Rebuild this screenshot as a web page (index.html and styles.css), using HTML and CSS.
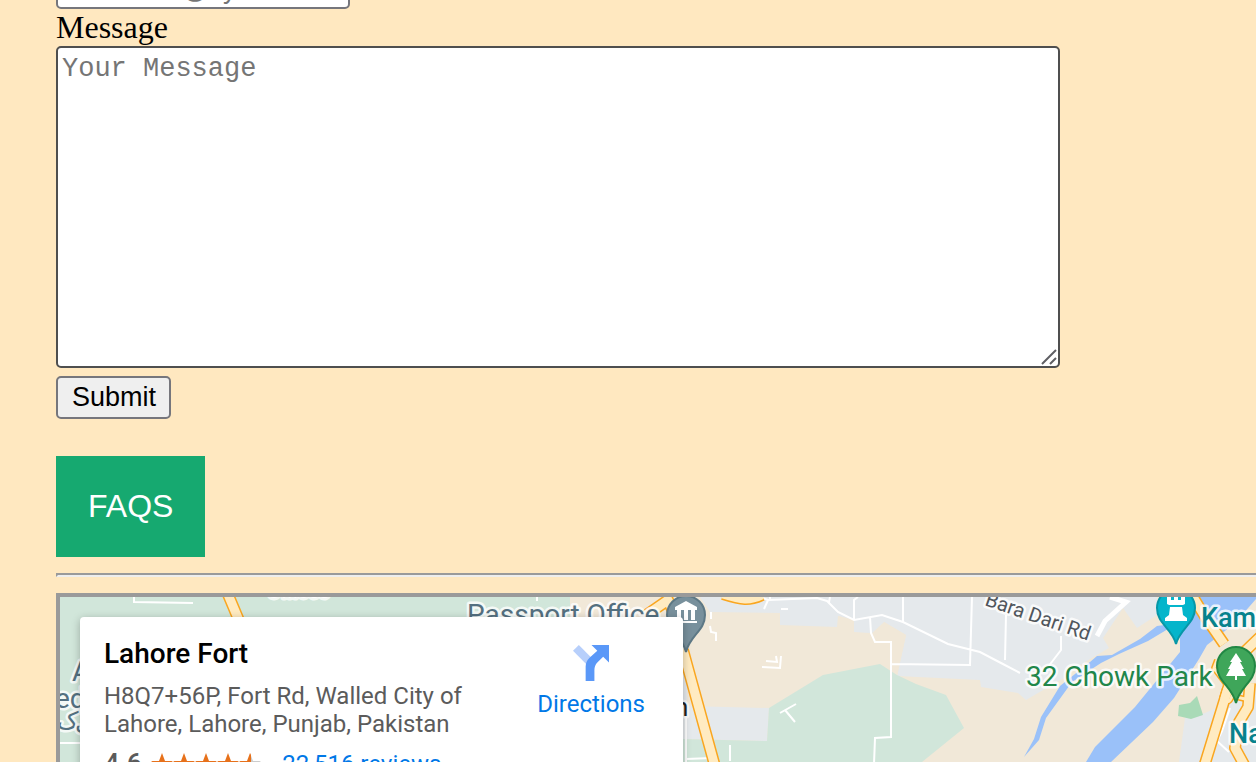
FILE: index.html
```html
<!DOCTYPE html>
<html lang="en">
<head>
<meta charset="utf-8">
<title>Contact</title>
<link rel="stylesheet" href="styles.css">
</head>
<body>
<main class="page">
  <form class="contact-form">
    <input class="text-field" type="email" placeholder="username@xyz" aria-label="Email">
    <label class="field-label" for="message">Message</label>
    <div class="message-wrap">
      <textarea class="message" id="message" placeholder="Your Message"></textarea>
      <svg class="grip" viewBox="0 0 16 16" aria-hidden="true"><path d="M1 15 15 1M9 15l6-6"/></svg>
    </div>
    <button class="submit" type="submit">Submit</button>
  </form>
  <a class="faq-link" href="#faqs">FAQS</a>
  <hr class="divider">
  <section class="map" aria-label="Map of Lahore Fort">
    <svg class="map-canvas" viewBox="60 597 1196 165" preserveAspectRatio="xMinYMin slice">
      <rect class="land" x="60" y="597" width="1196" height="165"/>
      <path class="green" d="M60 597H570V640H300V762H60Z"/>
      <path class="urban" d="M700 597 710 612 780 613V625L837 627 838 616 854 620V632L872 633 884 622 906 635 897 676 980 680 981 687 1018 693 1026 700 1062 679 1080 665 1109 648 1103 638 1123 608 1137 628 1157 615V597ZM687 706 769 708 767 741 687 739ZM1185 718 1205 713 1256 690V762H1179ZM683 670H687V739H683Z"/>
      <path class="land" d="M838 616 854 620V632L872 633 884 622 906 635 897 676H838Z"/>
      <path class="urban" d="M854 618V632L872 633 884 622 884 610Z"/>
      <path class="green" d="M769 708 823 675 880 664 897 675 916 684 946 695 964 728 922 762H683V739L767 741Z"/>
      <path class="grove" d="M1179 705 1190 703 1197 696 1203 715 1191 719 1178 716Z"/>
      <path class="water" d="M1172 597H1256V599L1235 623 1207 645 1199 659 1174 698 1153 722 1111 762H1086L1095 747 1135 707 1180 652V630L1168 629 1148 641 1119 654 1101 663 1072 682 1046 718 1039 740 1024 757 1034 739 1041 717 1060 686 1090 662 1097 656 1112 655 1140 639 1157 626 1172 624Z"/>
      <g class="street">
        <path d="M134 597V602L193 603M60 743H81M537 597V601"/>
        <path d="M760 597 768 600 817 598 827 601 838 612 854 620 882 615 903 622 948 644 980 652 1001 663 1020 673M770 597V600M768 600 764 609M830 597 829 602M854 620V600L858 597M870 617 871 633 875 642H891V737L875 738 874 764M903 597V622M972 597 970 665 891 664M1006 615 1005 660M1061 636V650L1048 667M781 609H788"/>
        <path d="M711 612V619M710 626 711 632 716 633V641M762 667 780 668 781 656M766 661 777 662 776 656M780 713 796 704M785 710 795 722M686 706V762M686 759 712 758M730 745V761M1230 708 1222 731 1217 741 1229 752"/>
        <path class="wide" d="M1097 636 1105 621 1126 602 1110 597"/>
      </g>
      <g class="road-edge">
        <path d="M227 592 243 630M645 616 668 600 674 614M683 650 716 770M723 594C742 600 749 601 762 595M1190 592 1204 615 1224 644M1236 660 1263 634M1230 682 1203 770M1250 683 1248 707 1239 722 1235 748 1247 770"/>
        <path class="thin" d="M1217 660 1214 668 1226 684M1225 688 1222 698Q1229 706 1232 696L1245 699"/>
      </g>
      <g class="road">
        <path d="M227 592 243 630M645 616 668 600 674 614M683 650 716 770M723 594C742 600 749 601 762 595M1190 592 1204 615 1224 644M1236 660 1263 634M1230 682 1203 770M1250 683 1248 707 1239 722 1235 748 1247 770"/>
        <path class="thin" d="M1217 660 1214 668 1226 684M1225 688 1222 698Q1229 706 1232 696L1245 699"/>
      </g>
      <g class="place">
        <text class="minor" x="72" y="681">A</text>
        <text class="minor" x="55" y="708">ed</text>
        <text class="arabic" x="57" y="729">ک</text>
        <text class="arabic" x="75" y="729">ل</text>
        <text class="minor" x="467" y="624">Passport Office</text>
        <text class="ghost" x="267" y="598">Offices</text>
        <text class="town" x="674" y="716">n</text>
        <text class="lane" transform="translate(984 605) rotate(19)">Bara Dari Rd</text>
        <text class="park" x="1026" y="686">32 Chowk Park</text>
        <text class="sight" x="1201" y="627">Kamran</text>
        <text class="sight" x="1229" y="743">Nawan</text>
      </g>
      <g transform="translate(686 615)">
        <path class="pin-slate" d="M0 37C-4 20-19 16-19 0A19 19 0 0 1 19 0C19 16 4 20 0 37Z"/>
        <path class="glyph" d="M-11-5V-8L0-14 11-8V-5H9V5H5V-5H2V5H-2V-5H-5V5H-9V-5ZM-11 6H11V8H-11Z"/>
      </g>
      <g transform="translate(1176 608)">
        <path class="pin-teal" d="M0 36C-4 20-19 16-19 0A19 19 0 0 1 19 0C19 16 4 20 0 36Z"/>
        <path class="glyph" d="M-9-13H-5V-8H-2V-13H2V-8H5V-13H9V-4L7-3H-7L-9-4ZM-6-1H6L7 7 11 10V13H-11V10L-7 7Z"/>
      </g>
      <g transform="translate(1236 666)">
        <path class="pin-green" d="M0 37C-4 20-19 16-19 0A19 19 0 0 1 19 0C19 16 4 20 0 37Z"/>
        <path class="glyph" d="M0-13 6-4H4L8 3H6L10 10H1V14H-1V10H-10L-6 3H-8L-4-4H-6Z"/>
      </g>
    </svg>
    <article class="info-card">
      <div class="info-main">
        <h2 class="info-title">Lahore Fort</h2>
        <p class="info-address">H8Q7+56P, Fort Rd, Walled City of Lahore, Lahore, Punjab, Pakistan</p>
        <div class="info-rating">
          <span class="score">4.6</span>
          <svg class="stars" viewBox="0 0 110 22" aria-label="4.6 of 5 stars">
            <path class="star" d="M11 0 14 8H22L15 13 18 21 11 16 4 21 7 13 0 8H8ZM33 0 36 8H44L37 13 40 21 33 16 26 21 29 13 22 8H30ZM55 0 58 8H66L59 13 62 21 55 16 48 21 51 13 44 8H52ZM77 0 80 8H88L81 13 84 21 77 16 70 21 73 13 66 8H74Z"/>
            <path class="star-off" d="M99 0 102 8H110L103 13 106 21 99 16Z"/>
            <path class="star" d="M99 0 100 2V17L99 16 92 21 95 13 88 8H96Z"/>
          </svg>
          <a class="reviews" href="#reviews">22,516 reviews</a>
        </div>
      </div>
      <a class="directions" href="#directions">
        <svg class="directions-icon" viewBox="0 0 37 37" aria-hidden="true">
          <path class="branch" d="M6 0 19 13 14 20 0 6Z"/>
          <path class="arrow" d="M19 0H37V18L31 12 25 18Q22 21 22 26V37H13V22Q13 17 17 13L25 6Z"/>
        </svg>
        Directions
      </a>
    </article>
  </section>
</main>
</body>
</html>
```
FILE: styles.css
```css
* { box-sizing: border-box; }

body {
  margin: 0;
  background: #ffe8c0;
  color: #000;
  font-family: "Liberation Serif", serif;
}

.page {
  display: flex;
  flex-direction: column;
  height: 100vh;
  padding-left: 56px;
  overflow: hidden;
}

.contact-form {
  display: flex;
  flex: none;
  flex-direction: column;
  align-items: flex-start;
  margin-top: -33px;
}

.text-field {
  width: 294px;
  height: 42px;
  padding: 4px 4px 2px;
  border: 2px solid #76767c;
  border-radius: 5px;
  background: #fff;
  font: 27px "Liberation Sans", sans-serif;
}

.text-field::placeholder,
.message::placeholder { color: #757575; opacity: 1; }

.field-label { font-size: 32px; line-height: 37px; }

.message-wrap {
  position: relative;
  width: calc(100% - 196px);
  max-width: 1004px;
}

.message {
  display: block;
  width: 100%;
  height: 322px;
  padding: 6px 4px;
  border: 2px solid #4f4f4f;
  border-radius: 5px;
  background: #fff;
  font: 27px/30px "Liberation Mono", monospace;
  resize: none;
}

.grip {
  position: absolute;
  right: 3px;
  bottom: 3px;
  width: 16px;
  height: 16px;
  fill: none;
  stroke: #5f5f64;
  stroke-width: 2;
}

.submit {
  height: 43px;
  margin-top: 8px;
  padding: 0 13px 0 14px;
  border: 2px solid #76767c;
  border-radius: 5px;
  background: #efefef;
  color: #000;
  font: 27px "Liberation Sans", sans-serif;
}

.faq-link {
  flex: none;
  align-self: flex-start;
  margin-top: 37px;
  padding: 32px;
  background: #16a970;
  color: #fff;
  font: 32px/37px "Liberation Sans", sans-serif;
  text-decoration: none;
}

.divider {
  flex: none;
  width: 100%;
  height: 4px;
  margin: 16px 0;
  border: 2px solid;
  border-color: #9a9a9a #eee #eee #9a9a9a;
  border-right: 0;
}

.map {
  position: relative;
  flex: 1;
  min-height: 0;
  border: solid #9a9a9a;
  border-width: 4px 0 0 4px;
  overflow: hidden;
  font-family: Roboto, sans-serif;
}

.map-canvas { display: block; width: 100%; height: 100%; }

.land { fill: #f1e8d8; }
.green { fill: #d1e6da; }
.urban { fill: #e5e9ec; }
.grove { fill: #a9dab7; }
.water { fill: #9ac1f9; }
.street { fill: none; stroke: #fff; stroke-width: 2; }
.street .wide { stroke-width: 5; }
.road-edge, .road { fill: none; stroke-linejoin: round; }
.road-edge { stroke: #faa61f; stroke-width: 12; }
.road { stroke: #ffebc1; stroke-width: 9; }
.road-edge .thin { stroke-width: 6; }
.road .thin { stroke-width: 3; }

.place {
  paint-order: stroke;
  stroke: #fffc;
  stroke-width: 5px;
  stroke-linejoin: round;
}

.minor { fill: #547080; font-size: 28px; }
.arabic { fill: #547080; font: 24px "DejaVu Sans", sans-serif; }
.ghost { fill: #fff; font-size: 20px; }
.town { fill: #222; font-size: 26px; }
.lane { fill: #50565c; font-size: 20px; }
.park { fill: #21864a; font-size: 28px; }
.sight { fill: #07828d; font-size: 27px; font-weight: 500; }

.pin-slate { fill: #78909c; stroke: #5d7885; stroke-width: 2; }
.pin-teal { fill: #04b5cb; stroke: #0697a7; stroke-width: 2; }
.pin-green { fill: #3fa65a; stroke: #218744; stroke-width: 2; }
.glyph { fill: #fff; }

.info-card {
  position: absolute;
  top: 20px;
  left: 20px;
  display: flex;
  justify-content: space-between;
  align-items: flex-start;
  width: 603px;
  height: 184px;
  padding: 21px 38px 20px 24px;
  border-radius: 4px;
  background: #fff;
  box-shadow: 0 2px 8px #0004;
}

.info-main { width: 370px; }
.info-title { margin: 0; font-size: 28px; font-weight: 500; line-height: 32px; }

.info-address {
  margin: 12px 0 0;
  color: #5b5b5b;
  font-size: 24px;
  line-height: 28px;
}

.info-rating {
  display: flex;
  align-items: center;
  margin-top: 12px;
  line-height: 28px;
}

.score { color: #5b5b5b; font-size: 27px; font-weight: 500; }
.stars { width: 110px; height: 22px; margin: 0 21px 0 9px; }
.star { fill: #e7711b; }
.star-off { fill: #ccc; }
.reviews { color: #0078e7; font-size: 24px; text-decoration: none; }

.directions {
  display: flex;
  flex-direction: column;
  align-items: center;
  gap: 9px;
  padding-top: 7px;
  color: #0078e7;
  font-size: 24px;
  line-height: 28px;
  text-decoration: none;
}

.directions-icon { width: 36px; height: 36px; }
.branch { fill: #b7cffb; }
.arrow { fill: #5a98f8; }
```
